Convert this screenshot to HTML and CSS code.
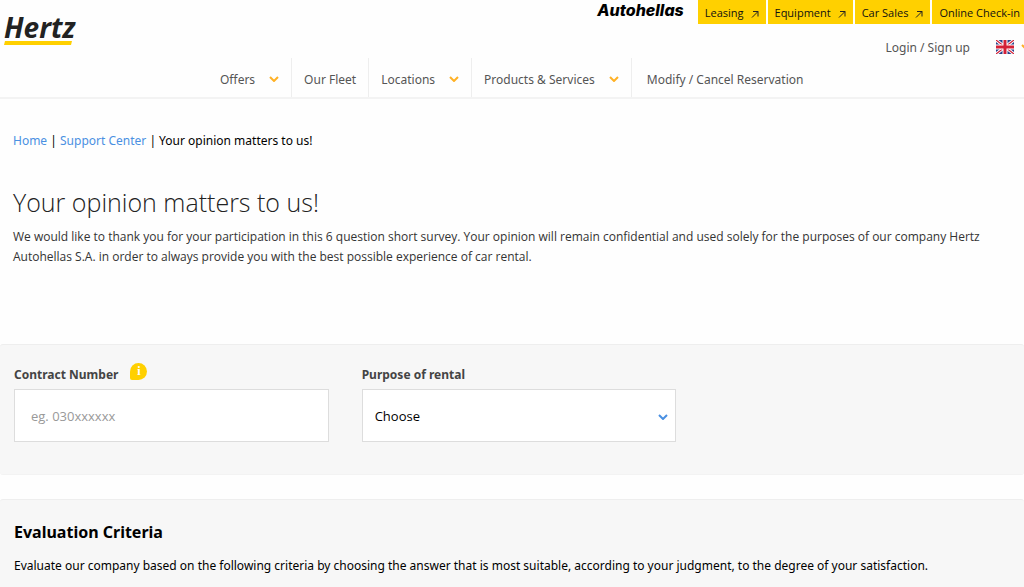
FILE: index.html
```
<!DOCTYPE html>
<html lang="en">
<head>
    <meta charset="UTF-8">
    <meta name="viewport" content="width=device-width, initial-scale=1.0">
    <title>Your opinion matters to us!</title>
    <link rel="stylesheet" href="styles.css">
</head>
<body>
    <header class="header">
        <div class="topbar">
            <a href="#" class="autohellas">Autohellas</a>
            <a href="#" class="top-link">Leasing
                <svg class="arrow" viewBox="0 0 8 8"><path d="M1 7.500 7 1.500M2 1.500h5v5"/></svg>
            </a>
            <a href="#" class="top-link">Equipment
                <svg class="arrow" viewBox="0 0 8 8"><path d="M1 7.500 7 1.500M2 1.500h5v5"/></svg>
            </a>
            <a href="#" class="top-link">Car Sales
                <svg class="arrow" viewBox="0 0 8 8"><path d="M1 7.500 7 1.500M2 1.500h5v5"/></svg>
            </a>
            <a href="#" class="top-link last">Online Check-in</a>
        </div>

        <div class="account">
            <a href="#" class="logo">
                <svg class="logo-mark" viewBox="0 0 80 36">
                    <text x="0" y="28">Hertz</text>
                    <path fill="#ffd000" d="M1 31h67l-1 4H0z"/>
                </svg>
            </a>
            <a href="#" class="login">Login / Sign up</a>
            <button type="button" class="lang" aria-label="Language">
                <svg class="flag" viewBox="0 0 18 14">
                    <path fill="#27408b" d="M0 0h18v14H0z"/>
                    <path stroke="#fff" stroke-width="3" d="M0 0l18 14M18 0 0 14"/>
                    <path stroke="#d32037" stroke-width="1.200" d="M0 0l18 14M18 0 0 14"/>
                    <path stroke="#fff" stroke-width="5" d="M9 0v14M0 7h18"/>
                    <path stroke="#d32037" stroke-width="3" d="M9 0v14M0 7h18"/>
                </svg>
                <svg class="chevron" viewBox="0 0 10 6"><path d="M1 1l4 4 4-4"/></svg>
            </button>
        </div>

        <nav class="menu">
            <a href="#" class="menu-item">Offers
                <svg class="chevron" viewBox="0 0 10 6"><path d="M1 1l4 4 4-4"/></svg>
            </a>
            <a href="#" class="menu-item">Our Fleet</a>
            <a href="#" class="menu-item">Locations
                <svg class="chevron" viewBox="0 0 10 6"><path d="M1 1l4 4 4-4"/></svg>
            </a>
            <a href="#" class="menu-item">Products &amp; Services
                <svg class="chevron" viewBox="0 0 10 6"><path d="M1 1l4 4 4-4"/></svg>
            </a>
            <a href="#" class="menu-item">Modify / Cancel Reservation</a>
        </nav>
    </header>

    <main>
        <section class="intro">
            <div class="breadcrumb">
                <a href="#">Home</a> | <a href="#">Support Center</a> | Your opinion matters to us!
            </div>
            <h1>Your opinion matters to us!</h1>
            <p>We would like to thank you for your participation in this 6 question short survey. Your opinion will remain confidential and used solely for the purposes of our company Hertz Autohellas S.A. in order to always provide you with the best possible experience of car rental.</p>
        </section>

        <form action="#">
            <section class="panel fields">
                <div class="field">
                    <div class="label-row">
                        <label for="contract">Contract Number</label>
                        <span class="info">i</span>
                    </div>
                    <input type="text" id="contract" placeholder="eg. 030xxxxxx">
                </div>
                <div class="field">
                    <div class="label-row">
                        <label for="purpose">Purpose of rental</label>
                    </div>
                    <div class="select-box">
                        <select id="purpose">
                            <option>Choose</option>
                        </select>
                        <svg class="chevron" viewBox="0 0 10 6"><path d="M1 1l4 4 4-4"/></svg>
                    </div>
                </div>
            </section>

            <section class="panel criteria">
                <h2>Evaluation Criteria</h2>
                <p>Evaluate our company based on the following criteria by choosing the answer that is most suitable, according to your judgment, to the degree of your satisfaction.</p>
            </section>
        </form>
    </main>
</body>
</html>
```
FILE: styles.css
```
* {
    box-sizing: border-box;
}
body {
    margin: 0;
    font-family: "Noto Sans", "Open Sans", sans-serif;
    font-size: 12px;
    color: #000;
    background-color: #fefefe;
    overflow-x: hidden;
}
a {
    text-decoration: none;
    color: #4a90e2;
}
h1, h2, p {
    margin: 0;
}
svg {
    flex: none;
    fill: none;
}

.header {
    border-bottom: 2px solid #f3f3f3;
}
.topbar {
    display: flex;
    justify-content: flex-end;
    height: 24px;
    gap: 2px;
}
.autohellas {
    margin-right: 12px;
    font-family: Inter, sans-serif;
    font-size: 16px;
    font-weight: 800;
    font-style: italic;
    line-height: 20px;
    color: #000;
}
.top-link {
    display: flex;
    align-items: center;
    gap: 7px;
    padding: 1px 7px 0;
    font-family: "Open Sans", sans-serif;
    font-size: 11px;
    line-height: 24px;
    color: #111;
    background-color: #ffd000;
}
.last {
    padding-right: 4px;
}
.arrow {
    width: 8px;
    height: 8px;
    margin-top: 2px;
    stroke: #222;
}
.chevron {
    width: 10px;
    height: 6px;
    stroke: #ffb125;
    stroke-width: 2px;
}

.account {
    display: flex;
    align-items: center;
    height: 34px;
    padding-left: 4px;
}
.logo {
    align-self: flex-start;
    margin-top: -14px;
}
.logo-mark {
    display: block;
    width: 80px;
    height: 36px;
    overflow: visible;
}
.logo-mark text {
    font-family: "Open Sans", sans-serif;
    font-size: 28px;
    font-weight: 700;
    font-style: italic;
    fill: #222;
}
.login {
    margin-left: auto;
    margin-top: 12px;
    color: #555;
}
.lang {
    display: flex;
    align-items: center;
    gap: 7px;
    margin: 12px -7px 0 26px;
    padding: 0;
    border: 0;
    background: none;
}
.flag {
    width: 18px;
    height: 14px;
}

.menu {
    display: flex;
    padding-left: 208px;
}
.menu-item {
    display: flex;
    align-items: center;
    gap: 14px;
    height: 39px;
    padding: 3px 12px 0;
    color: #555;
    border-right: 1px solid #eee;
}
.menu-item:last-child {
    padding-left: 15px;
    border-right: 0;
}

.intro {
    padding: 32px 13px 77px;
}
.breadcrumb {
    line-height: 20px;
}
h1 {
    margin-top: 31px;
    font-family: "Open Sans", sans-serif;
    font-size: 25px;
    font-weight: 300;
    line-height: 40px;
    color: #222;
}
.intro p {
    margin-top: 5px;
    font-family: "Open Sans", sans-serif;
    font-size: 12px;
    line-height: 20px;
    color: #333;
}

.panel {
    padding: 0 14px;
    background-color: #f7f7f7;
    border-top: 1px solid #eee;
    border-bottom: 1px solid #f3f3f3;
    border-radius: 3px;
}
.fields {
    display: grid;
    grid-template-columns: repeat(auto-fill, minmax(300px, 1fr));
    column-gap: 33px;
    padding-top: 16px;
    padding-right: 0;
    padding-bottom: 32px;
}
.label-row {
    display: flex;
    height: 28px;
    gap: 12px;
}
label {
    padding-top: 4px;
    font-weight: 700;
    line-height: 20px;
    color: #444;
}
.info {
    width: 17px;
    height: 17px;
    margin-top: 2px;
    border-radius: 50% 50% 50% 2px;
    font-family: "Liberation Serif", serif;
    font-weight: 700;
    line-height: 17px;
    text-align: center;
    color: #fff;
    background-color: #ffd000;
}
input, select {
    display: block;
    width: 100%;
    height: 53px;
    border: 1px solid #ddd;
    border-radius: 0;
    font-family: "Open Sans", sans-serif;
    font-size: 13px;
    color: #000;
    background-color: #fff;
    appearance: none;
}
input {
    padding: 0 16px;
}
input::placeholder {
    color: #999;
}
select {
    padding: 0 12px;
}
.select-box {
    position: relative;
}
.select-box .chevron {
    position: absolute;
    top: 25px;
    right: 8px;
    stroke: #4a90e2;
    pointer-events: none;
}

.criteria {
    margin-top: 24px;
    padding-top: 20px;
    padding-bottom: 20px;
}
h2 {
    font-size: 16px;
    line-height: 24px;
}
.criteria p {
    margin-top: 12px;
    line-height: 20px;
}
```
